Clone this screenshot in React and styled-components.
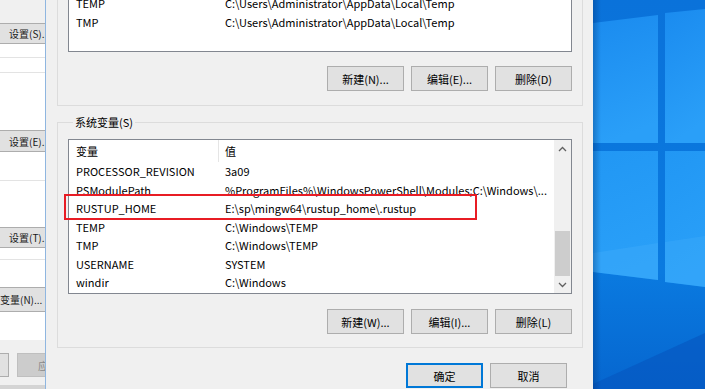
import React from "react";
import styled, { createGlobalStyle } from "styled-components";

const Global = createGlobalStyle`
  html, body { margin: 0; padding: 0; overflow: hidden; background: #f0f0f0; }
  body {
    font-family: "Noto Sans CJK SC", "Noto Sans", sans-serif;
    font-size: 11px;
    color: #000;
  }
  * { box-sizing: border-box; }
`;

const Screen = styled.div`
  display: flex;
  width: 705px;
  height: 389px;
  overflow: hidden;
`;

/* ---------- background window (left) ---------- */
const BackWindow = styled.div`
  width: 45px;
  flex: none;
  display: flex;
  flex-direction: column;
  background: #fff;
  overflow: hidden;
  font-size: 10px;
`;

const BackFill = styled.div`
  height: ${(p) => p.$h}px;
  flex: none;
  background: ${(p) => p.$bg || "#fff"};
  border-bottom: ${(p) => (p.$line ? "1px solid #e3e3e3" : "none")};
`;

const BackButton = styled.div`
  height: ${(p) => p.$h}px;
  flex: none;
  background: #e1e1e1;
  border-top: 1px solid #adadad;
  border-bottom: 1px solid #adadad;
  display: flex;
  align-items: center;
  white-space: nowrap;
  color: #1a1a1a;
`;

const BackLabel = styled.span`
  margin-left: ${(p) => p.$indent}px;
  flex: none;
`;

const BackFooter = styled.div`
  flex: 1;
  background: #f0f0f0;
  display: flex;
  gap: 8px;
  padding-top: 13px;
  border-bottom: 4px solid #d4d4d4;
`;

const BackFooterButton = styled.div`
  width: 75px;
  height: 24px;
  flex: none;
  margin-left: ${(p) => p.$offset || 0}px;
  border: 1px solid ${(p) => (p.$disabled ? "#bfbfbf" : "#adadad")};
  background: ${(p) => (p.$disabled ? "#cccccc" : "#e1e1e1")};
  color: ${(p) => (p.$disabled ? "#8a8a8a" : "#000")};
  display: flex;
  align-items: center;
  justify-content: center;
  white-space: nowrap;
`;

/* ---------- main dialog ---------- */
const Dialog = styled.div`
  width: 548px;
  flex: none;
  border-left: 1px solid #8fb6e0;
  background: #f0f0f0;
  padding-left: 11px;
  display: flex;
  flex-direction: column;
`;

const GroupTail = styled.div`
  width: 526px;
  margin-top: -20px;
  border: 1px solid #dcdcdc;
  padding: 12px 10px 14px;
`;

const GroupBox = styled.fieldset`
  width: 526px;
  margin: 8px 0 0;
  border: 1px solid #dcdcdc;
  padding: 9px 10px 13px;
  min-width: 0;
`;

const Legend = styled.legend`
  margin-left: 5px;
  padding: 0 2px;
  line-height: 16px;
  color: #000;
`;

const ListWrap = styled.div`
  position: relative;
`;

const ListBox = styled.div`
  height: ${(p) => p.$h}px;
  border: 1px solid #828790;
  background: #fff;
  display: flex;
  overflow: hidden;
`;

const ListBody = styled.div`
  flex: 1;
  min-width: 0;
  display: flex;
  flex-direction: column;
`;

const HeaderRow = styled.div`
  display: grid;
  grid-template-columns: 150px 1fr;
  height: 22px;
  flex: none;
`;

const HeaderCell = styled.div`
  display: flex;
  align-items: center;
  padding-left: ${(p) => (p.$first ? 7 : 6)}px;
  border-right: ${(p) => (p.$first ? "1px solid #e5e5e5" : "none")};
`;

const Row = styled.div`
  display: grid;
  grid-template-columns: 150px 1fr;
  height: 18.5px;
  flex: none;
  align-items: center;
  white-space: nowrap;
`;

const Cell = styled.div`
  padding-left: ${(p) => (p.$first ? 7 : 6)}px;
  overflow: hidden;
  line-height: 16px;
`;

const VScroll = styled.div`
  width: 17px;
  flex: none;
  background: #f0f0f0;
  display: flex;
  flex-direction: column;
`;

const ScrollArrow = styled.div`
  height: 17px;
  flex: none;
  display: flex;
  align-items: center;
  justify-content: center;
`;

const ScrollTrack = styled.div`
  flex: 1;
  display: flex;
  flex-direction: column;
  justify-content: flex-end;
`;

const ScrollThumb = styled.div`
  height: 45px;
  margin: 0 1px;
  background: #cdcdcd;
`;

const Highlight = styled.div`
  position: absolute;
  left: -4px;
  top: 55px;
  width: 413px;
  height: 26px;
  border: 2px solid #e81c24;
  pointer-events: none;
`;

const ButtonRow = styled.div`
  display: flex;
  justify-content: flex-end;
  gap: 7px;
  margin-top: ${(p) => p.$mt}px;
  padding-right: ${(p) => p.$pr || 0}px;
`;

const Btn = styled.button`
  width: 77px;
  height: 25px;
  flex: none;
  padding: 0;
  border: 1px solid ${(p) => (p.$default ? "#0078d7" : "#adadad")};
  box-shadow: ${(p) => (p.$default ? "inset 0 0 0 1px #0078d7" : "none")};
  background: #e1e1e1;
  color: #000;
  font: inherit;
  display: flex;
  align-items: center;
  justify-content: center;
  white-space: nowrap;
`;

const Wallpaper = styled.div`
  flex: 1;
  height: 389px;
  display: flex;
`;

const Chevron = ({ up }) => (
  <svg width="9" height="6" viewBox="0 0 9 6">
    <path
      d={up ? "M1 5 L4.5 1.5 L8 5" : "M1 1 L4.5 4.5 L8 1"}
      fill="none"
      stroke="#606060"
      strokeWidth="1.3"
    />
  </svg>
);

const userRows = [
  ["TEMP", "C:\\Users\\Administrator\\AppData\\Local\\Temp"],
  ["TMP", "C:\\Users\\Administrator\\AppData\\Local\\Temp"],
];

const sysRows = [
  ["PROCESSOR_REVISION", "3a09"],
  ["PSModulePath", "%ProgramFiles%\\WindowsPowerShell\\Modules;C:\\Windows\\..."],
  ["RUSTUP_HOME", "E:\\sp\\mingw64\\rustup_home\\.rustup"],
  ["TEMP", "C:\\Windows\\TEMP"],
  ["TMP", "C:\\Windows\\TEMP"],
  ["USERNAME", "SYSTEM"],
  ["windir", "C:\\Windows"],
];

const WallpaperArt = () => (
  <svg width="112" height="389" viewBox="0 0 112 389">
    <defs>
      <linearGradient id="wbg" x1="0" y1="0" x2="0" y2="1">
        <stop offset="0" stopColor="#0a72da" />
        <stop offset="0.7" stopColor="#0a7ae0" />
        <stop offset="1" stopColor="#0666cf" />
      </linearGradient>
      <linearGradient id="wpane" x1="0" y1="0" x2="0.2" y2="1">
        <stop offset="0" stopColor="#1a8bef" />
        <stop offset="1" stopColor="#2a9ff8" />
      </linearGradient>
      <linearGradient id="wpane2" x1="0" y1="0" x2="0.2" y2="1">
        <stop offset="0" stopColor="#2197f4" />
        <stop offset="1" stopColor="#2aa0f8" />
      </linearGradient>
      <linearGradient id="wshade" x1="0" x2="1">
        <stop offset="0" stopColor="#00306e" stopOpacity="0.35" />
        <stop offset="1" stopColor="#00306e" stopOpacity="0" />
      </linearGradient>
    </defs>
    <rect width="112" height="389" fill="url(#wbg)" />
    <polygon points="0,23 65,15 65,143 0,143" fill="url(#wpane)" />
    <polygon points="72,13 112,9 112,143 72,143" fill="url(#wpane)" />
    <polygon points="0,151 65,151 65,280 0,272" fill="url(#wpane2)" />
    <polygon points="72,151 112,151 112,287 72,282" fill="url(#wpane2)" />
    <polygon points="0,253 65,243 65,280 0,272" fill="#45b0fb" opacity="0.35" />
    <polygon points="72,242 112,236 112,287 72,282" fill="#45b0fb" opacity="0.3" />
    <polygon points="112,333 112,389 0,389 0,384" fill="#0558c2" opacity="0.7" />
    <rect width="8" height="389" fill="url(#wshade)" />
  </svg>
);

export default function App() {
  return (
    <Screen>
      <Global />
      <BackWindow>
        <BackFill $h={23} $bg="#f0f0f0" />
        <BackButton $h={21}>
          <BackLabel $indent={9}>设置(S)...</BackLabel>
        </BackButton>
        <BackFill $h={14} $line />
        <BackFill $h={15} $line />
        <BackFill $h={57} />
        <BackButton $h={22}>
          <BackLabel $indent={9}>设置(E)...</BackLabel>
        </BackButton>
        <BackFill $h={29} $line />
        <BackFill $h={46} />
        <BackButton $h={21}>
          <BackLabel $indent={9}>设置(T)...</BackLabel>
        </BackButton>
        <BackFill $h={12} $line />
        <BackFill $h={27} />
        <BackButton $h={25}>
          <BackLabel $indent={-20}>环境变量(N)...</BackLabel>
        </BackButton>
        <BackFill $h={28} />
        <BackFooter>
          <BackFooterButton $offset={-66}>确定</BackFooterButton>
          <BackFooterButton $disabled>应用(A)</BackFooterButton>
        </BackFooter>
      </BackWindow>

      <Dialog>
        <GroupTail>
          <ListBox $h={59}>
            <ListBody>
              {userRows.map(([k, v]) => (
                <Row key={k}>
                  <Cell $first>{k}</Cell>
                  <Cell>{v}</Cell>
                </Row>
              ))}
            </ListBody>
          </ListBox>
          <ButtonRow $mt={14}>
            <Btn>新建(N)...</Btn>
            <Btn>编辑(E)...</Btn>
            <Btn>删除(D)</Btn>
          </ButtonRow>
        </GroupTail>

        <GroupBox>
          <Legend>系统变量(S)</Legend>
          <ListWrap>
            <ListBox $h={155}>
              <ListBody>
                <HeaderRow>
                  <HeaderCell $first>变量</HeaderCell>
                  <HeaderCell>值</HeaderCell>
                </HeaderRow>
                {sysRows.map(([k, v]) => (
                  <Row key={k}>
                    <Cell $first>{k}</Cell>
                    <Cell>{v}</Cell>
                  </Row>
                ))}
              </ListBody>
              <VScroll>
                <ScrollArrow>
                  <Chevron up />
                </ScrollArrow>
                <ScrollTrack>
                  <ScrollThumb />
                </ScrollTrack>
                <ScrollArrow>
                  <Chevron />
                </ScrollArrow>
              </VScroll>
            </ListBox>
            <Highlight />
          </ListWrap>
          <ButtonRow $mt={15}>
            <Btn>新建(W)...</Btn>
            <Btn>编辑(I)...</Btn>
            <Btn>删除(L)</Btn>
          </ButtonRow>
        </GroupBox>

        <ButtonRow $mt={15} $pr={26}>
          <Btn $default>确定</Btn>
          <Btn>取消</Btn>
        </ButtonRow>
      </Dialog>

      <Wallpaper>
        <WallpaperArt />
      </Wallpaper>
    </Screen>
  );
}
